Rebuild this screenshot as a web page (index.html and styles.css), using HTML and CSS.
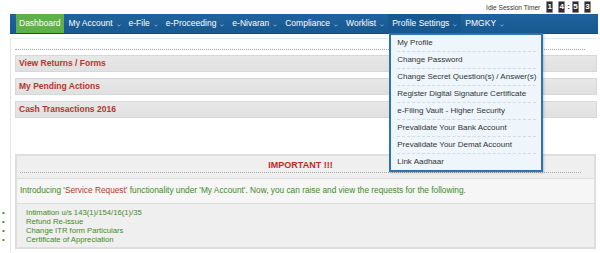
FILE: index.html
```html
<!DOCTYPE html>
<html lang="en">
<head>
    <meta charset="UTF-8">
    <meta name="viewport" content="width=device-width, initial-scale=1.0">
    <title>e-Filing Dashboard</title>
    <link rel="stylesheet" href="styles.css">
</head>
<body>
    <div class="page">
        <div class="topbar">
            <span class="idle-label">Idle Session Timer</span>
            <div class="timer">
                <span class="digit">1</span>
                <span class="digit">4</span>
                <span class="colon">:</span>
                <span class="digit">5</span>
                <span class="digit">3</span>
            </div>
        </div>

        <nav class="menu">
            <ul class="menu-list">
                <li class="menu-item active">Dashboard</li>
                <li class="menu-item">My Account<svg class="caret" viewBox="0 0 4 3"><polyline points="0.4,0.6 2,2.2 3.6,0.6"/></svg></li>
                <li class="menu-item">e-File<svg class="caret" viewBox="0 0 4 3"><polyline points="0.4,0.6 2,2.2 3.6,0.6"/></svg></li>
                <li class="menu-item">e-Proceeding<svg class="caret" viewBox="0 0 4 3"><polyline points="0.4,0.6 2,2.2 3.6,0.6"/></svg></li>
                <li class="menu-item">e-Nivaran<svg class="caret" viewBox="0 0 4 3"><polyline points="0.4,0.6 2,2.2 3.6,0.6"/></svg></li>
                <li class="menu-item">Compliance<svg class="caret" viewBox="0 0 4 3"><polyline points="0.4,0.6 2,2.2 3.6,0.6"/></svg></li>
                <li class="menu-item">Worklist<svg class="caret" viewBox="0 0 4 3"><polyline points="0.4,0.6 2,2.2 3.6,0.6"/></svg></li>
                <li class="menu-item open">Profile Settings<svg class="caret" viewBox="0 0 4 3"><polyline points="0.4,0.6 2,2.2 3.6,0.6"/></svg>
                    <ul class="dropdown">
                        <li>My Profile</li>
                        <li>Change Password</li>
                        <li>Change Secret Question(s) / Answer(s)</li>
                        <li>Register Digital Signature Certificate</li>
                        <li>e-Filing Vault - Higher Security</li>
                        <li>Prevalidate Your Bank Account</li>
                        <li>Prevalidate Your Demat Account</li>
                        <li>Link Aadhaar</li>
                    </ul>
                </li>
                <li class="menu-item">PMGKY<svg class="caret" viewBox="0 0 4 3"><polyline points="0.4,0.6 2,2.2 3.6,0.6"/></svg></li>
            </ul>
        </nav>

        <div class="panel">
            <div class="rule"></div>

            <div class="bar">View Returns / Forms</div>
            <div class="bar">My Pending Actions</div>
            <div class="bar">Cash Transactions 2016</div>

            <div class="important">
                <div class="important-head">
                    <h4>IMPORTANT !!!</h4>
                </div>
                <div class="important-msg">
                    Introducing <span class="hl">'Service Request'</span> functionality under 'My Account'. Now, you can raise and view the requests for the following.
                </div>
                <ul class="important-list">
                    <li>Intimation u/s 143(1)/154/16(1)/35</li>
                    <li>Refund Re-issue</li>
                    <li>Change ITR form Particulars</li>
                    <li>Certificate of Appreciation</li>
                </ul>
            </div>
        </div>
    </div>
</body>
</html>
```

FILE: styles.css
```css
body, html {
    margin: 0;
    padding: 0;
    background: #ffffff;
    font-family: "Liberation Sans", Arial, Helvetica, sans-serif;
    overflow: hidden;
}

.page {
    width: 600px;
}

/* top strip with idle timer */
.topbar {
    height: 14px;
    display: flex;
    justify-content: flex-end;
    align-items: center;
    padding-right: 9px;
}

.idle-label {
    font-size: 6.6px;
    color: #333333;
    margin-right: 6px;
}

.timer {
    display: flex;
    align-items: center;
}

.timer .digit {
    width: 7px;
    height: 12px;
    box-sizing: border-box;
    background: #2e2e2e;
    border: 1px solid #8a8a8a;
    border-radius: 1px;
    color: #ffffff;
    font-size: 8px;
    font-weight: bold;
    line-height: 10px;
    text-align: center;
    margin-left: 5px;
}

.timer .digit:first-child {
    margin-left: 0;
}

.timer .colon {
    font-size: 8px;
    font-weight: bold;
    color: #333333;
    margin-left: 2px;
    margin-right: -3px;
    line-height: 10px;
}

/* main navigation */
.menu {
    margin-left: 10px;
    width: 588px;
    height: 20px;
    background: linear-gradient(#1f639e, #175991);
    border-bottom: 1px solid #124a7b;
    box-sizing: border-box;
    padding-left: 6px;
    position: relative;
}

.menu-list {
    list-style: none;
    margin: 0;
    padding: 0;
    display: flex;
    height: 100%;
}

.menu-item {
    position: relative;
    display: flex;
    align-items: center;
    padding: 0 4px;
    color: #ffffff;
    font-size: 8.5px;
    line-height: 19px;
    white-space: nowrap;
}

.menu-item.active {
    background: #5db148;
    padding: 0 3px;
    margin-right: 1px;
}

.menu-item.open {
    background: #175890;
}

.caret {
    width: 4px;
    height: 3px;
    margin-left: 4px;
    margin-top: 3px;
}

.caret polyline {
    fill: none;
    stroke: #9fbcd8;
    stroke-width: 0.8;
}

.dropdown {
    position: absolute;
    top: 19px;
    left: 1px;
    width: 154px;
    box-sizing: border-box;
    list-style: none;
    margin: 0;
    padding: 0 5px 0 6px;
    background: #eef6fc;
    border: 2px solid #2f72ad;
    box-shadow: 1px 1px 2px rgba(0, 0, 0, 0.2);
    z-index: 10;
}

.dropdown li {
    height: 16px;
    line-height: 16px;
    font-size: 8px;
    color: #333333;
    border-bottom: 1px dashed #d2dbe2;
}

.dropdown li:last-child {
    border-bottom: none;
}

/* content panel */
.panel {
    margin-top: 4px;
    margin-left: 10px;
    border-left: 1px solid #e3e3e3;
    border-top: 1px solid #ececec;
    padding: 10px 3px 0 4px;
    height: 204px;
}

.rule {
    margin-right: 12px;
    border-top: 1px dotted #a8a8a8;
    margin-bottom: 5px;
}

.bar {
    height: 17px;
    box-sizing: border-box;
    background: linear-gradient(#e8e8e8, #e0e0e0);
    border: 1px solid #d8d8d8;
    color: #b3372c;
    font-size: 8.5px;
    font-weight: bold;
    line-height: 15px;
    padding-left: 3px;
    margin-bottom: 6px;
}

.important {
    margin-top: 36px;
    margin-right: 1px;
    border: 2px solid #dedede;
    background: #efefef;
}

.important-head {
    height: 22px;
    padding: 0 13px 0 3px;
}

.important-head h4 {
    margin: 0;
    height: 16px;
    line-height: 18px;
    text-align: center;
    font-size: 9px;
    font-weight: bold;
    color: #c12a1c;
    border-bottom: 1px dotted #a8a8a8;
}

.important-msg {
    height: 24px;
    background: #f6f6f6;
    border-top: 1px solid #dcdcdc;
    border-bottom: 1px solid #dcdcdc;
    font-size: 8.3px;
    line-height: 22px;
    color: #3f8a1f;
    padding-left: 3px;
}

.important-msg .hl {
    color: #b13a2a;
}

.important-list {
    list-style: none;
    margin: 0;
    padding: 4px 0 3px 9px;
}

.important-list li {
    display: flex;
    font-size: 7.7px;
    line-height: 9px;
    color: #3f8a1f;
}

.important-list li::before {
    content: "\2022";
    width: 24px;
    margin-left: -24px;
    color: #3f8a1f;
}
```
